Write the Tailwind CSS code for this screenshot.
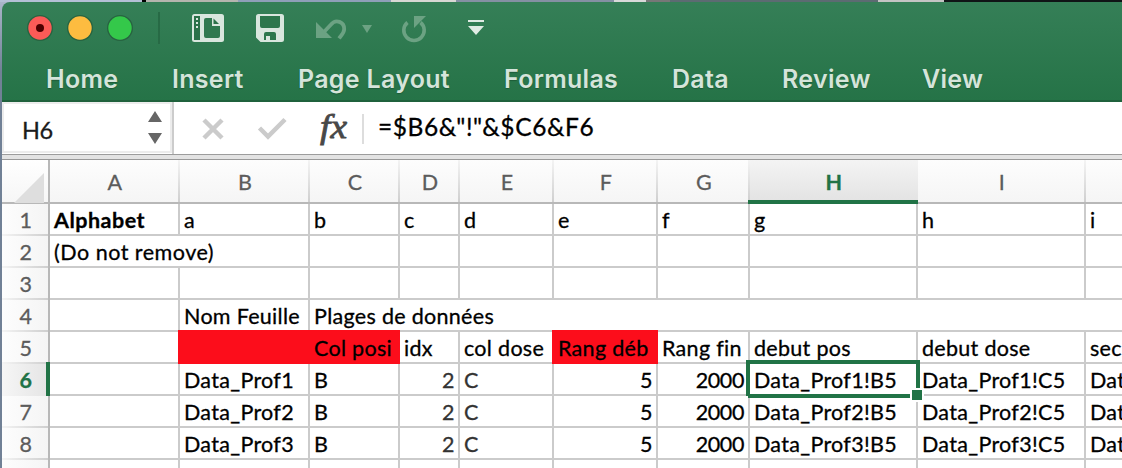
<!DOCTYPE html>
<html lang="en">
<head>
<meta charset="utf-8">
<title>Workbook</title>
<script src="https://cdn.jsdelivr.net/npm/@tailwindcss/browser@4"></script>
</head>
<body class="w-[1122px] h-[468px] overflow-hidden bg-[#75859a] font-['Lato',sans-serif]">
<div class="flex h-[2px]">
  <div class="w-[142px] bg-[#b4c0d6]"></div><div class="w-[4px] bg-black"></div><div class="w-[92px] bg-[#b5b5ae]"></div>
  <div class="w-[153px] bg-[#8f9fb8]"></div><div class="w-[65px] bg-[#d8d8d4]"></div><div class="w-[158px] bg-[#8490a3]"></div>
  <div class="w-[32px] bg-[#d9d9d9]"></div><div class="w-[24px] bg-[#777]"></div><div class="w-[208px] bg-[#5c6b72]"></div><div class="w-[66px] bg-[#c4c4c4]"></div><div class="flex-1 bg-[#101416]"></div>
</div>
<div class="h-[466px] pl-[2px] bg-linear-to-b from-[#a9b5c9] from-0% to-[#718196] to-15%">
<main class="h-full">
  <header class="h-[100px] rounded-tl-[8px] bg-linear-to-b from-[#357f57] to-[#257347] border-b-2 border-[#1f613c]">
    <div class="h-[52px] flex">
      <div class="flex gap-[14px] pl-[25px] pt-[13px] w-[156px]">
        <svg width="26" height="26"><circle cx="13" cy="13" r="13" fill="#276340"/><circle cx="13" cy="13" r="11.7" fill="#fc5b57"/><circle cx="13" cy="13" r="4" fill="#4d0000"/></svg>
        <svg width="26" height="26"><circle cx="13" cy="13" r="13" fill="#276340"/><circle cx="13" cy="13" r="11.7" fill="#fdbc40"/></svg>
        <svg width="26" height="26"><circle cx="13" cy="13" r="13" fill="#276340"/><circle cx="13" cy="13" r="11.7" fill="#34c84a"/></svg>
      </div>
      <div class="mt-[10px] w-[2px] h-[32px] bg-[#276a45]"></div>
      <svg class="block" width="340" height="52" viewBox="160 2 340 52">
        <!-- sidebar panel -->
        <rect x="192" y="14" width="32" height="28" rx="2.5" fill="#d9e6de"/>
        <rect x="194" y="16" width="6" height="24" fill="#2b7149"/>
        <path d="M196 18h2v2h-2zM196 22h2v2h-2zM196 26h2v2h-2z" fill="#d9e6de"/>
        <path d="M206 18h6v8h8v10a2 2 0 0 1-2 2h-12a2 2 0 0 1-2-2V20a2 2 0 0 1 2-2z" fill="#2f784f"/>
        <path d="M213.500 18.500l5.500 5.500h-5.500z" fill="#2b7149"/>
        <!-- disk -->
        <path d="M258.500 14h23a2.500 2.500 0 0 1 2.500 2.500v23a2.500 2.500 0 0 1-2.500 2.500h-21l-4.500-4.500v-21a2.500 2.500 0 0 1 2.500-2.500z" fill="#d9e6de"/>
        <path d="M260 16h20v10a2 2 0 0 1-2 2h-16a2 2 0 0 1-2-2zM264 40v-6a2 2 0 0 1 2-2h8a2 2 0 0 1 2 2v6h-6v-4h-4v4z" fill="#2c764c"/>
        <!-- undo -->
        <path d="M316 22v16h16z" fill="#6ca283"/>
        <path d="M323 33l8-8.500c5-6 13.200-2.500 13.200 4.500c0 4-2.700 6-5.200 9.300" fill="none" stroke="#6ca283" stroke-width="3.800"/>
        <path d="M362 25h10l-5 8z" fill="#6ca283"/>
        <!-- redo -->
        <path d="M407.500 22.500A10.200 10.200 0 1 0 420.500 22.500" fill="none" stroke="#6ca283" stroke-width="3.600"/>
        <path d="M414 16h12l-12 12z" fill="#6ca283"/>
        <!-- customise -->
        <path d="M468 20h16v2h-16zM468 26h16l-8 9z" fill="#e0ebe4"/>
      </svg>
    </div>
    <nav class="grid grid-cols-[126px_126px_206px_168px_110px_140px_100px] pl-[44px] pt-[9px] font-['Inter',sans-serif] font-semibold text-[25px] leading-[32px] tracking-[0.3px] text-[#d5e4da] whitespace-nowrap [text-shadow:0_1px_1px_#1d5c38]">
      <span>Home</span><span>Insert</span><span>Page Layout</span><span>Formulas</span><span>Data</span><span>Review</span><span>View</span>
    </nav>
  </header>
  <section class="h-[52px] flex bg-white">
    <div class="w-[170px] h-[51px] border-2 border-[#ececec] flex justify-between pl-[18px] pr-[8px]">
      <span class="self-start text-[23.500px] leading-[28px] mt-[12px] tracking-[-0.5px] text-[#1c1c1c] [-webkit-text-stroke:0.3px_#1c1c1c]">H6</span>
      <svg class="mt-[6px]" width="14" height="36"><path d="M0 12L7 1l7 11zM0 23h14l-7 11z" fill="#666"/></svg>
    </div>
    <div class="w-[2px] bg-[#ccc]"></div>
    <svg width="190" height="52" viewBox="174 102 190 52">
      <path d="M204 120l18 18m0-18l-18 18" stroke="#cbcbcb" stroke-width="4.500"/>
      <path d="M259.500 128l8.500 8.500L285 119.500" fill="none" stroke="#cbcbcb" stroke-width="4.500"/>
      <text x="320" y="138" font-family="Liberation Serif" font-style="italic" font-size="33" fill="#484848" stroke="#484848" stroke-width=".8" textLength="27" lengthAdjust="spacingAndGlyphs">fx</text>
      <path d="M362 114h2v30h-2z" fill="#ddd"/>
    </svg>
    <span class="pl-[14px] pt-[9px] text-[24.500px] leading-[32px] tracking-[0.6px] text-black self-start [-webkit-text-stroke:0.3px_#000]">=$B6&amp;"!"&amp;$C6&amp;F6</span>
  </section>
  <div class="h-[6px] bg-[#e3e3e3] border-t border-b border-t-[#9c9c9c] border-b-[#999]"></div>
  <div id="sheet" class="grid grid-cols-[48px_130px_130px_90px_60px_94px_104px_92px_168px_168px_90px] grid-rows-[44px_repeat(9,32px)] h-[308px] overflow-hidden bg-white text-[21.500px] leading-[33px] whitespace-nowrap text-black tracking-[0.3px] [-webkit-text-stroke:0.3px]"></div>
</main>
</div>
<script>
// Cell prefixes: * bold, ~ no right gridline, ! red fill, > right aligned
const cols = ['A','B','C','D','E','F','G','H','I',''];
const rows = [
  ['*Alphabet','a','b','c','d','e','f','g','h','i'],
  ['~(Do not remove)','','','','','','','','',''],
  ['','','','','','','','','',''],
  ['','Nom Feuille','~Plages de données','~','~','~','~','~','~','~'],
  ['','!','!Col posi','idx','col dose','!Rang déb','Rang fin','debut pos','debut dose','sec'],
  ...[1,2,3].map(n => ['','Data_Prof'+n,'B','>2','C','>5','>2000','Data_Prof'+n+'!B5','Data_Prof'+n+'!C5','Dat']),
  ['','','','','','','','','','']
];
let h = '<div class="relative border-r-2 border-b-2 border-[#b8b8b8] bg-linear-to-b from-white to-[#f6f6f6]"><svg class="absolute left-[12px] top-[13px]" width="30" height="30"><path d="M30 0v30H0z" fill="#dedede"/></svg></div>';
cols.forEach(c => {
  h += c === 'H'
    ? '<div class="relative text-center leading-[45px] font-bold text-[#217346] bg-linear-to-b from-[#f4f4f4] to-[#e2e2e2]"><div class="absolute -left-[2px] right-0 bottom-0 h-[4px] bg-[#217346]"></div>H</div>'
    : '<div class="relative text-center leading-[45px] text-[#5c5c5c] border-b-2 border-[#b8b8b8] bg-linear-to-b from-[#fdfdfd] to-[#f5f5f5]"><div class="absolute right-0 top-0 bottom-0 w-[2px] bg-linear-to-b from-[#f4f4f4] to-[#cfcfcf]"></div>' + c + '</div>';
});
rows.forEach((r, i) => {
  h += i === 5
    ? '<div class="relative text-center font-bold text-[#217346] bg-linear-to-r from-[#f6f6f6] to-[#e4e4e4]"><div class="absolute right-0 -top-[2px] bottom-0 w-[4px] bg-[#217346] z-10"></div>6</div>'
    : '<div class="relative text-center pl-[2px] text-[#5c5c5c] border-r-2 border-[#b8b8b8] bg-linear-to-r from-[#fdfdfd] to-[#f5f5f5]"><div class="absolute inset-x-0 bottom-0 h-[2px] bg-linear-to-r from-[#f4f4f4] to-[#cfcfcf]"></div>' + (i < 8 ? i + 1 : '') + '</div>';
  r.forEach((v, j) => {
    const k = /^[*~!>]/.test(v) ? v[0] : '', t = k ? v.slice(1) : v;
    h += '<div class="relative border-b-2 border-[#cbcbcb] pl-[4px] ' + (k === '~' ? '' : 'border-r-2 ') + (k === '>' ? 'text-right tracking-[-0.4px] pr-[4px] ' : '') + (k === '*' ? 'font-bold tracking-[0.5px] ' : '') + (i === 1 ? 'tracking-[0.5px] ' : '') + '">' +
      (k === '!' ? '<div class="absolute -inset-[2px] bg-[#fc0d1b]"></div>' : '') +
      '<span class="relative' + ((j === 3 || j === 4) && i > 4 ? ' text-[#333]' : '') + '">' + t + '</span>' +
      (i === 5 && j === 7 ? '<svg class="absolute -left-[4px] -top-[4px] z-20" width="178" height="42"><path d="M2 36V2h170v26M2 36h162" fill="none" stroke="#217346" stroke-width="4"/><path d="M164 28h14v14h-14z" fill="#fff"/><path d="M166 30h10v10h-10z" fill="#217346"/></svg>' : '') + '</div>';
  });
});
document.getElementById('sheet').innerHTML = h;
</script>
</body>
</html>
